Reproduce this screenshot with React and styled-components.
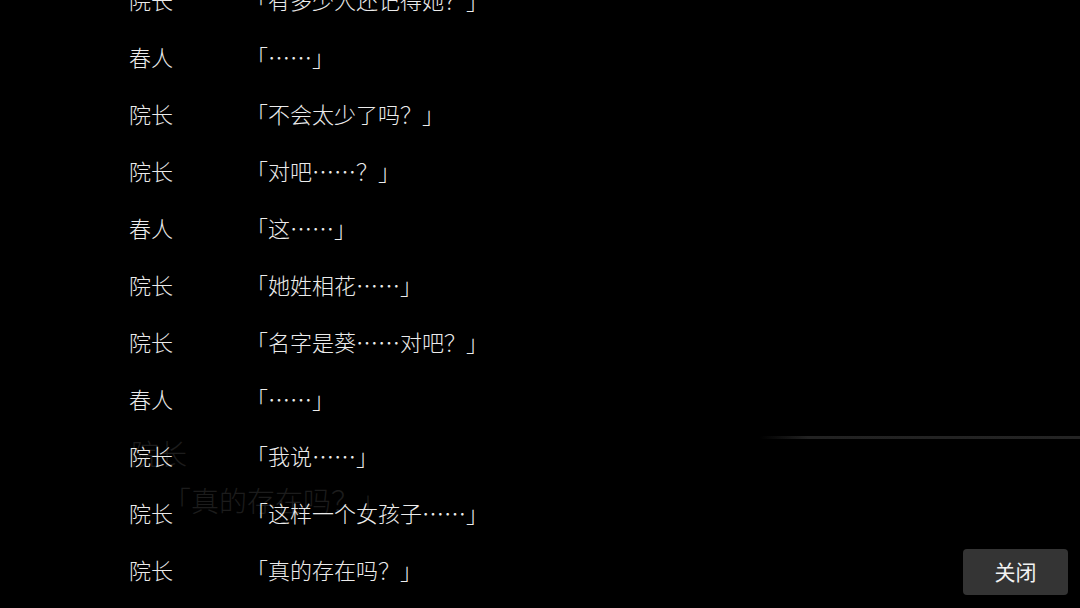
import React from 'react'
import styled, { createGlobalStyle } from 'styled-components'

const lines = [
  ['院长', '「有多少人还记得她？」'],
  ['春人', '「……」'],
  ['院长', '「不会太少了吗？」'],
  ['院长', '「对吧……？」'],
  ['春人', '「这……」'],
  ['院长', '「她姓相花……」'],
  ['院长', '「名字是葵……对吧？」'],
  ['春人', '「……」'],
  ['院长', '「我说……」'],
  ['院长', '「这样一个女孩子……」'],
  ['院长', '「真的存在吗？」'],
]

function App() {
  return (
    <Screen>
      <GlobalStyle />
      <Scene>
        <SceneLine />
        <SceneName>院长</SceneName>
        <SceneText>「真的存在吗？」</SceneText>
      </Scene>
      <Backlog>
        {lines.map(([name, text], i) => (
          <Row key={i}>
            <Name>{name}</Name>
            <Text>{text}</Text>
          </Row>
        ))}
      </Backlog>
      <CloseButton>关闭</CloseButton>
    </Screen>
  )
}

export default App

const GlobalStyle = createGlobalStyle`
  html, body {
    margin: 0;
    padding: 0;
    background: #000;
    overflow: hidden;
  }
  body {
    font-family: "Noto Sans CJK SC", "Noto Sans", sans-serif;
  }
`

const Screen = styled.div`
  position: relative;
  width: 1080px;
  height: 608px;
  background: #000;
  overflow: hidden;
`

/* the game scene dimly visible under the backlog overlay */
const Scene = styled.div`
  position: absolute;
  inset: 0;
  pointer-events: none;
`

const SceneLine = styled.div`
  position: absolute;
  left: 760px;
  top: 436px;
  width: 320px;
  height: 3px;
  background: linear-gradient(to right, rgba(40, 40, 40, 0), #222 15%, #242424);
`

const SceneName = styled.div`
  position: absolute;
  left: 131px;
  top: 435px;
  font-size: 28px;
  line-height: 36px;
  font-weight: 300;
  color: #1c1c1c;
`

const SceneText = styled.div`
  position: absolute;
  left: 163px;
  top: 481px;
  font-size: 28px;
  line-height: 38px;
  font-weight: 300;
  color: #1c1c1c;
`

const Backlog = styled.div`
  position: relative;
  margin-top: -30px;
  padding-left: 129px;
  display: flex;
  flex-direction: column;
`

const Row = styled.div`
  display: grid;
  grid-template-columns: 117px 1fr;
  height: 57px;
  align-items: center;
  font-size: 22px;
  font-weight: 300;
  color: #ececec;
`

const Name = styled.div`
  line-height: 1;
`

const Text = styled.div`
  line-height: 1;
`

const CloseButton = styled.button`
  position: absolute;
  right: 12px;
  bottom: 13px;
  width: 105px;
  height: 46px;
  border: none;
  border-radius: 4px;
  background: #343434;
  color: #f2f2f2;
  font-family: "Noto Sans CJK SC", sans-serif;
  font-size: 21px;
  padding: 0 0 2px;
  cursor: pointer;
`
